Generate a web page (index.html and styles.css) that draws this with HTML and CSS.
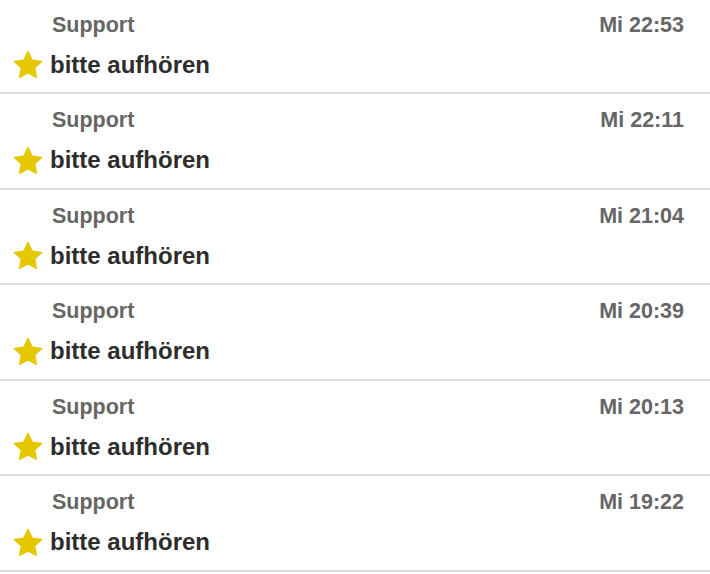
FILE: index.html
```html
<!DOCTYPE html>
<html lang="de">
<head>
    <meta charset="UTF-8">
    <title>Posteingang</title>
    <link rel="stylesheet" href="styles.css">
</head>
<body>

    <ul class="mail-list">
        <li class="mail">
            <div class="mail-head">
                <span class="sender">Support</span>
                <span class="time">Mi 22:53</span>
            </div>
            <div class="mail-subject">
                <svg class="star" viewBox="2 2 20 19.02"><polygon points="12,2 15.09,8.26 22,9.27 17,14.14 18.18,21.02 12,17.77 5.82,21.02 7,14.14 2,9.27 8.91,8.26"/></svg>
                <span class="subject">bitte aufhören</span>
            </div>
        </li>
        <li class="mail">
            <div class="mail-head">
                <span class="sender">Support</span>
                <span class="time">Mi 22:11</span>
            </div>
            <div class="mail-subject">
                <svg class="star" viewBox="2 2 20 19.02"><polygon points="12,2 15.09,8.26 22,9.27 17,14.14 18.18,21.02 12,17.77 5.82,21.02 7,14.14 2,9.27 8.91,8.26"/></svg>
                <span class="subject">bitte aufhören</span>
            </div>
        </li>
        <li class="mail">
            <div class="mail-head">
                <span class="sender">Support</span>
                <span class="time">Mi 21:04</span>
            </div>
            <div class="mail-subject">
                <svg class="star" viewBox="2 2 20 19.02"><polygon points="12,2 15.09,8.26 22,9.27 17,14.14 18.18,21.02 12,17.77 5.82,21.02 7,14.14 2,9.27 8.91,8.26"/></svg>
                <span class="subject">bitte aufhören</span>
            </div>
        </li>
        <li class="mail">
            <div class="mail-head">
                <span class="sender">Support</span>
                <span class="time">Mi 20:39</span>
            </div>
            <div class="mail-subject">
                <svg class="star" viewBox="2 2 20 19.02"><polygon points="12,2 15.09,8.26 22,9.27 17,14.14 18.18,21.02 12,17.77 5.82,21.02 7,14.14 2,9.27 8.91,8.26"/></svg>
                <span class="subject">bitte aufhören</span>
            </div>
        </li>
        <li class="mail">
            <div class="mail-head">
                <span class="sender">Support</span>
                <span class="time">Mi 20:13</span>
            </div>
            <div class="mail-subject">
                <svg class="star" viewBox="2 2 20 19.02"><polygon points="12,2 15.09,8.26 22,9.27 17,14.14 18.18,21.02 12,17.77 5.82,21.02 7,14.14 2,9.27 8.91,8.26"/></svg>
                <span class="subject">bitte aufhören</span>
            </div>
        </li>
        <li class="mail">
            <div class="mail-head">
                <span class="sender">Support</span>
                <span class="time">Mi 19:22</span>
            </div>
            <div class="mail-subject">
                <svg class="star" viewBox="2 2 20 19.02"><polygon points="12,2 15.09,8.26 22,9.27 17,14.14 18.18,21.02 12,17.77 5.82,21.02 7,14.14 2,9.27 8.91,8.26"/></svg>
                <span class="subject">bitte aufhören</span>
            </div>
        </li>
    </ul>

</body>
</html>
```

FILE: styles.css
```css
body {
    font-family: "Liberation Sans", Arial, sans-serif;
    background-color: #fff;
    margin: 0;
    padding: 0;
    overflow: hidden;
}

.mail-list {
    list-style: none;
    margin: -1.5px 0 0 0;
    padding: 0;
}

.mail {
    height: 93.5px;
    box-sizing: content-box;
    padding: 0 26px 0 13px;
    border-bottom: 2px solid #dcdcdc;
}

.mail-head {
    display: flex;
    justify-content: space-between;
    padding-top: 13px;
    padding-left: 39px;
    font-size: 21.5px;
    line-height: 26px;
    font-weight: bold;
    color: #666;
}

.mail-subject {
    display: flex;
    align-items: center;
    gap: 7px;
    margin-top: 12px;
    font-size: 24px;
    line-height: 30px;
    font-weight: bold;
    color: #2d2d2d;
}

.star {
    width: 30px;
    height: 28.5px;
    fill: #e6c800;
}
```
